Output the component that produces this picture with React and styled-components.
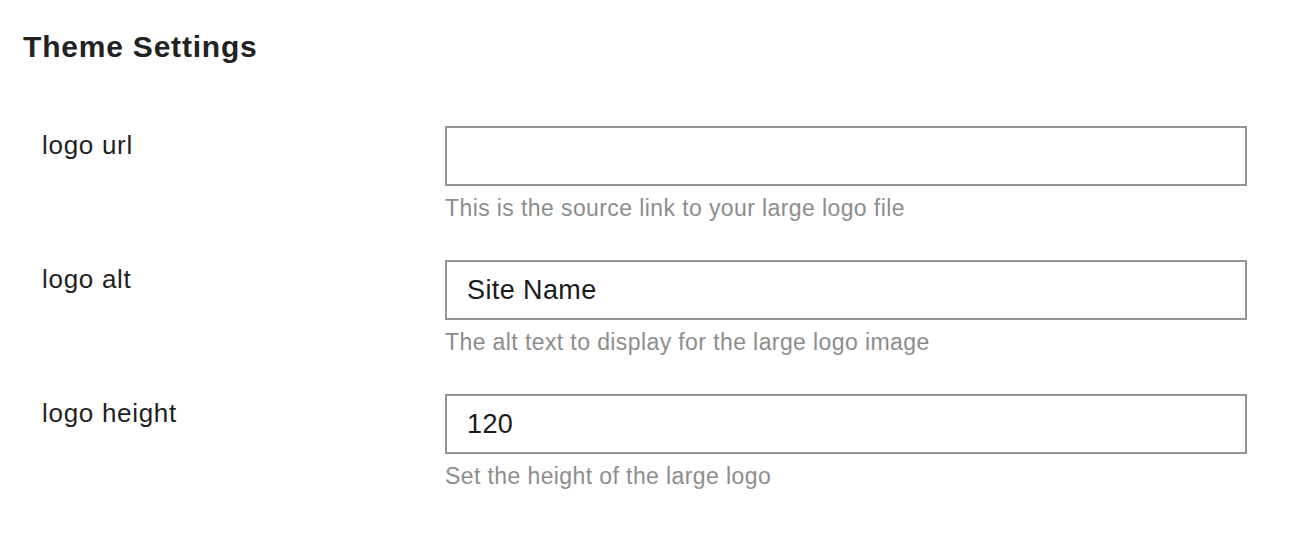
import React from "react";
import styled, { createGlobalStyle } from "styled-components";

const GlobalStyle = createGlobalStyle`
  html, body {
    margin: 0;
    padding: 0;
    background: #ffffff;
  }
  body {
    font-family: "Liberation Sans", Arial, sans-serif;
    color: #1f1f1f;
  }
`;

const Page = styled.div`
  width: 1308px;
  height: 534px;
  box-sizing: border-box;
  padding: 29px 62px 0 23px;
`;

const Title = styled.h2`
  margin: 0 0 61px;
  font-size: 30px;
  line-height: 36px;
  letter-spacing: 0.8px;
  font-weight: 700;
  color: #222;
`;

const Form = styled.div`
  display: flex;
  flex-direction: column;
  gap: 20px;
  padding-left: 19px;
`;

const Row = styled.div`
  display: grid;
  grid-template-columns: 403px 1fr;
  align-items: start;
`;

const Label = styled.label`
  font-size: 26px;
  line-height: 30px;
  letter-spacing: 0.7px;
  padding-top: 4px;
  color: #1f1f1f;
`;

const Field = styled.div`
  display: flex;
  flex-direction: column;
`;

const Input = styled.input`
  box-sizing: border-box;
  width: 802px;
  height: 60px;
  border: 2px solid #949494;
  border-radius: 0;
  padding: 0 20px;
  font-family: "Liberation Sans", Arial, sans-serif;
  font-size: 27px;
  letter-spacing: 0.4px;
  color: #1a1a1a;
  outline: none;
  background: #fff;
`;

const Help = styled.div`
  margin-top: 8px;
  font-size: 23px;
  line-height: 28px;
  letter-spacing: 0.4px;
  height: 46px;
  color: #8d8d8d;
`;

const fields = [
  { id: "logo-url", label: "logo url", value: "", help: "This is the source link to your large logo file" },
  { id: "logo-alt", label: "logo alt", value: "Site Name", help: "The alt text to display for the large logo image" },
  { id: "logo-height", label: "logo height", value: "120", help: "Set the height of the large logo" },
];

export default function App() {
  return (
    <>
      <GlobalStyle />
      <Page>
        <Title>Theme Settings</Title>
        <Form>
          {fields.map((f) => (
            <Row key={f.id}>
              <Label htmlFor={f.id}>{f.label}</Label>
              <Field>
                <Input id={f.id} type="text" defaultValue={f.value} />
                <Help>{f.help}</Help>
              </Field>
            </Row>
          ))}
        </Form>
      </Page>
    </>
  );
}
